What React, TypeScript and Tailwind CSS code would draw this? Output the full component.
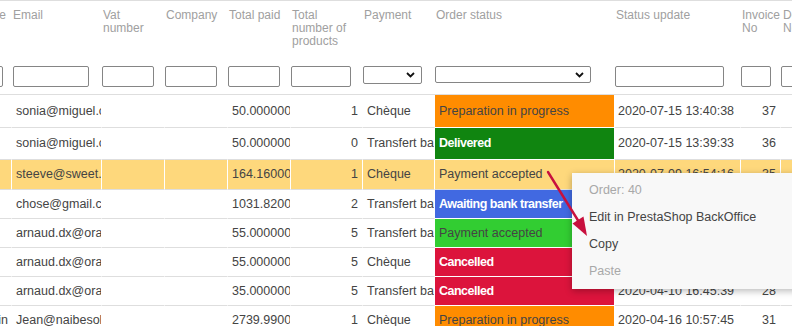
import React from 'react';

type StatusKey = 'prep' | 'delivered' | 'accepted' | 'awaiting' | 'cancelled';

const STATUS: Record<StatusKey, { label: string; cls: string }> = {
  prep: { label: 'Preparation in progress', cls: 'bg-[#ff8c00] text-[#444] text-[12.5px]' },
  delivered: { label: 'Delivered', cls: 'bg-[#108510] text-white font-bold text-[12.5px] tracking-[-0.5px]' },
  accepted: { label: 'Payment accepted', cls: 'bg-[#32cd32] text-[#444] text-[12.5px]' },
  awaiting: { label: 'Awaiting bank transfer', cls: 'bg-[#4169e1] text-white font-bold text-[12.5px] tracking-[-0.5px]' },
  cancelled: { label: 'Cancelled', cls: 'bg-[#dc143c] text-white font-bold text-[12.5px] tracking-[-0.5px]' },
};

type Row = {
  first?: string;
  email: string;
  paid: string;
  qty: number;
  payment: string;
  status: StatusKey;
  date: string;
  invoice: string;
  h: string;
  selected?: boolean;
};

const ROWS: Row[] = [
  { email: 'sonia@miguel.com', paid: '50.000000', qty: 1, payment: 'Chèque', status: 'prep', date: '2020-07-15 13:40:38', invoice: '37', h: 'h-[33px]' },
  { email: 'sonia@miguel.com', paid: '50.000000', qty: 0, payment: 'Transfert bancaire', status: 'delivered', date: '2020-07-15 13:39:33', invoice: '36', h: 'h-[32px]' },
  { email: 'steeve@sweet.fr', paid: '164.160000', qty: 1, payment: 'Chèque', status: 'accepted', date: '2020-07-09 16:54:16', invoice: '35', h: 'h-[30px]', selected: true },
  { email: 'chose@gmail.com', paid: '1031.8200', qty: 2, payment: 'Transfert bancaire', status: 'awaiting', date: '2020-05-28 11:02:47', invoice: '', h: 'h-[29px]' },
  { email: 'arnaud.dx@orange.fr', paid: '55.000000', qty: 5, payment: 'Transfert bancaire', status: 'accepted', date: '2020-04-22 09:31:12', invoice: '30', h: 'h-[29px]' },
  { email: 'arnaud.dx@orange.fr', paid: '55.000000', qty: 5, payment: 'Chèque', status: 'cancelled', date: '2020-04-21 18:14:05', invoice: '29', h: 'h-[29px]' },
  { email: 'arnaud.dx@orange.fr', paid: '35.000000', qty: 5, payment: 'Transfert bancaire', status: 'cancelled', date: '2020-04-10 16:45:39', invoice: '28', h: 'h-[29px]' },
  { first: 'Martin', email: 'Jean@naibesolutions.com', paid: '2739.9900', qty: 1, payment: 'Chèque', status: 'prep', date: '2020-04-16 10:57:45', invoice: '31', h: 'h-[29px]' },
];

function TextFilter({ w }: { w: string }) {
  return <div className={`${w} h-[21px] shrink-0 rounded-[2px] border border-[#858585] bg-white`} />;
}

function SelectFilter({ w, h }: { w: string; h: string }) {
  return (
    <div className={`${w} ${h} shrink-0 rounded-[2px] border border-[#858585] bg-white flex items-center justify-end pr-[6px]`}>
      <svg width="9" height="6" viewBox="0 0 9 6">
        <path d="M1 1 L4.5 4.5 L8 1" fill="none" stroke="#111" strokeWidth="1.8" />
      </svg>
    </div>
  );
}

const cell = 'shrink-0 overflow-hidden whitespace-nowrap flex items-center border-r border-b border-r-white border-b-[#dedede]';

export default function App() {
  return (
    <div className="relative w-[792px] h-[326px] overflow-hidden bg-white font-['Liberation_Sans',Arial,sans-serif] text-[#444]">
      <div className="w-max">
        {/* header + filters */}
        <div className="border-t border-b border-[#dedede]">
          <div className="flex h-[56px] items-start pt-[8px] text-[12px] leading-[13px] text-[#a0a0a0]">
            <div className="w-[12px] shrink-0 overflow-hidden flex justify-end pr-[6px] whitespace-nowrap">Lastname</div>
            <div className="w-[90px] shrink-0 pl-[1px]">Email</div>
            <div className="w-[63px] shrink-0 pl-[1px]">Vat<br />number</div>
            <div className="w-[63px] shrink-0 pl-[1px]">Company</div>
            <div className="w-[63px] shrink-0 pl-[1px] whitespace-nowrap">Total paid</div>
            <div className="w-[72px] shrink-0 pl-[1px]">Total<br />number of<br />products</div>
            <div className="w-[72px] shrink-0 pl-[1px]">Payment</div>
            <div className="w-[180px] shrink-0 pl-[1px]">Order status</div>
            <div className="w-[126px] shrink-0 pl-[1px]">Status update</div>
            <div className="w-[40px] shrink-0 pl-[1px] overflow-hidden whitespace-nowrap">Invoice<br />No</div>
            <div className="w-[60px] shrink-0 pl-[2px] whitespace-nowrap">Delivery<br />No</div>
          </div>
          <div className="flex h-[37px] items-start pt-[9px]">
            <div className="w-[12px] shrink-0 overflow-hidden flex justify-end pr-[9px]"><TextFilter w="w-[40px]" /></div>
            <div className="w-[90px] shrink-0 pl-[1px]"><TextFilter w="w-[76px]" /></div>
            <div className="w-[63px] shrink-0"><TextFilter w="w-[52px]" /></div>
            <div className="w-[63px] shrink-0"><TextFilter w="w-[52px]" /></div>
            <div className="w-[63px] shrink-0"><TextFilter w="w-[52px]" /></div>
            <div className="w-[72px] shrink-0"><TextFilter w="w-[60px]" /></div>
            <div className="w-[72px] shrink-0"><SelectFilter w="w-[59px]" h="h-[18px]" /></div>
            <div className="w-[180px] shrink-0"><SelectFilter w="w-[156px]" h="h-[17px]" /></div>
            <div className="w-[126px] shrink-0"><TextFilter w="w-[109px]" /></div>
            <div className="w-[40px] shrink-0"><TextFilter w="w-[30px]" /></div>
            <div className="w-[60px] shrink-0"><TextFilter w="w-[30px]" /></div>
          </div>
        </div>

        {/* rows */}
        {ROWS.map((r, i) => {
          const bg = r.selected ? 'bg-[#fed87c]' : 'bg-white';
          const st = STATUS[r.status];
          return (
            <div key={i} className={`flex ${r.h} text-[12.5px]`}>
              <div className={`${cell} ${bg} w-[12px] justify-end pr-[3px]`}>{r.first}</div>
              <div className={`${cell} ${bg} w-[90px] pl-[4px]`}>{r.email}</div>
              <div className={`${cell} ${bg} w-[63px]`} />
              <div className={`${cell} ${bg} w-[63px]`} />
              <div className={`${cell} ${bg} w-[63px] pl-[4px]`}>{r.paid}</div>
              <div className={`${cell} ${bg} w-[72px] justify-end pr-[4px]`}>{r.qty}</div>
              <div className={`${cell} ${bg} w-[72px] pl-[4px]`}>{r.payment}</div>
              <div className={`${cell} w-[180px] pl-[4px] ${r.selected ? 'bg-[#fed87c] text-[12.5px]' : `${st.cls} border-b-white`}`}>{st.label}</div>
              <div className={`${cell} ${bg} w-[126px] pl-[3px]`}>{r.date}</div>
              <div className={`${cell} ${bg} w-[40px] justify-end pr-[4px]`}>{r.invoice}</div>
              <div className={`${cell} ${bg} w-[60px]`} />
            </div>
          );
        })}
      </div>

      {/* context menu */}
      <div className="absolute left-[572px] top-[173px] w-[240px] h-[116px] py-[4px] bg-[#f8f8f8] shadow-[0_2px_7px_rgba(0,0,0,0.28)] text-[12.5px]">
        <div className="h-[27px] flex items-center pl-[17px] text-[#a8a8a8]">Order: 40</div>
        <div className="h-[27px] flex items-center pl-[17px] text-[#444]">Edit in PrestaShop BackOffice</div>
        <div className="h-[27px] flex items-center pl-[17px] text-[#444]">Copy</div>
        <div className="h-[27px] flex items-center pl-[17px] text-[#a8a8a8]">Paste</div>
      </div>

      {/* annotation arrow */}
      <svg className="absolute left-0 top-0 pointer-events-none" width="792" height="326" viewBox="0 0 792 326">
        <line x1="548" y1="172" x2="579" y2="222" stroke="#c8103e" strokeWidth="2.4" strokeLinecap="round" />
        <polygon points="587,236 572.5,223.5 583.5,216.5" fill="#c8103e" />
      </svg>
    </div>
  );
}
